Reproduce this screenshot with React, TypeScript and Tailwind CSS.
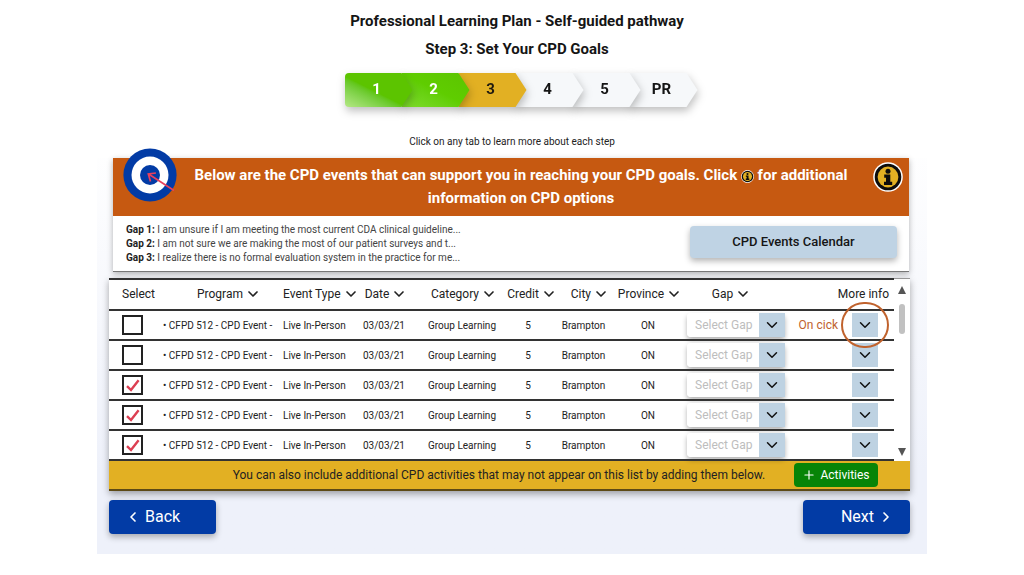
import { ChevronDown, ChevronLeft, ChevronRight, Plus } from 'lucide-react'

const steps = [
  { label: '1', order: 'z-[6]', look: 'rounded-l bg-linear-to-tr from-[#b4e884] via-[#5cc400] via-45% to-[#5cc400] text-white' },
  { label: '2', order: 'z-[5]', look: 'bg-linear-to-tr from-[#7fdc2a] via-[#5fcd00] via-50% to-[#5cc400] text-white' },
  { label: '3', order: 'z-[4]', look: 'bg-[#e2b023] text-[#1f1a10]' },
  { label: '4', order: 'z-[3]', look: 'bg-[#f6f8fa] text-[#151515]' },
  { label: '5', order: 'z-[2]', look: 'bg-[#f6f8fa] text-[#151515]' },
  { label: 'PR', order: 'z-[1]', look: 'bg-[#f6f8fa] text-[#151515]' }
]

const gaps = [
  'I am unsure if I am meeting the most current CDA clinical guideline...',
  'I am not sure we are making the most of our patient surveys and t...',
  'I realize there is no formal evaluation system in the practice for me...'
]

const columns = [
  { title: 'Program', width: 'w-[120px]', align: 'justify-center pl-3' },
  { title: 'Event Type', width: 'w-[75px]', align: 'justify-start' },
  { title: 'Date', width: 'w-[56px]', align: 'justify-center' },
  { title: 'Category', width: 'w-[96px]', align: 'justify-center pl-1' },
  { title: 'Credit', width: 'w-[44px]', align: 'justify-center' },
  { title: 'City', width: 'w-[63px]', align: 'justify-end pr-2' },
  { title: 'Province', width: 'w-[66px]', align: 'justify-center' },
  { title: 'Gap', width: 'w-[109px]', align: 'justify-center pr-3' }
]

const events = [
  { id: 1, checked: false, hint: true },
  { id: 2, checked: false, hint: false },
  { id: 3, checked: true, hint: false },
  { id: 4, checked: true, hint: false },
  { id: 5, checked: true, hint: false }
]

function InfoIcon({ className }: { className: string }) {
  return (
    <svg viewBox="0 0 30 30" className={className} aria-hidden="true">
      <circle cx="15" cy="15" r="14.8" fill="#fff" />
      <circle cx="15" cy="15" r="13.3" fill="#0c0c0c" />
      <circle cx="15" cy="15" r="10.4" fill="#e2b023" />
      <circle cx="15" cy="9.2" r="2.5" fill="#0c0c0c" />
      <path d="M11.2 12.6h6.1v7.2h1.9v3.2h-8.2v-3.2h2v-4h-1.8z" fill="#0c0c0c" />
    </svg>
  )
}

function TargetIcon() {
  return (
    <svg viewBox="0 0 54 54" className="absolute left-[10px] -top-[10px] w-[54px] h-[54px]" aria-hidden="true">
      <circle cx="27" cy="27" r="26.6" fill="#023ba5" />
      <circle cx="27" cy="27" r="18.5" fill="#fff" />
      <circle cx="27" cy="27" r="10" fill="#023ba5" />
      <path d="M51 42.5 25.5 26M27.5 33.5 25.3 26l7.6-1" fill="none" stroke="#e8405c" strokeWidth="1.7" />
    </svg>
  )
}

function SelectBox({ checked }: { checked: boolean }) {
  return (
    <label className="grid w-[21px] h-5 place-items-center">
      <input
        type="checkbox"
        defaultChecked={checked}
        aria-label="Select event"
        className="peer col-start-1 row-start-1 appearance-none w-full h-full border-2 border-[#222] bg-white"
      />
      <svg viewBox="0 0 16 14" className="col-start-1 row-start-1 w-4 h-[14px] pointer-events-none invisible peer-checked:visible" aria-hidden="true">
        <path d="M2 8.2 6 12 13.6 2.2" fill="none" stroke="#dc3f52" strokeWidth="2.4" />
      </svg>
    </label>
  )
}

function GapSelect() {
  return (
    <div className="grid w-[98px] h-6 shadow-[0_3px_5px_rgba(0,0,0,0.3)] rounded-sm">
      <select aria-label="Select gap" className="col-start-1 row-start-1 appearance-none w-full bg-white rounded-sm pl-2 text-[12px] text-[#bdbdbd]">
        <option>Select Gap</option>
        <option>Gap 1</option>
        <option>Gap 2</option>
        <option>Gap 3</option>
      </select>
      <span className="col-start-1 row-start-1 justify-self-end flex items-center justify-center w-[26px] bg-[#bed2e2] pointer-events-none">
        <ChevronDown className="w-[18px] h-[18px] text-[#111]" />
      </span>
    </div>
  )
}

export default function App() {
  return (
    <main className="max-w-[830px] mx-auto bg-linear-to-b from-white from-25% to-[#eef1fa] to-85% font-['Roboto',sans-serif] text-[#222]">
      <header className="flex flex-col items-center pt-[7px] pb-2 bg-white">
        <h1 className="text-[15px] leading-7 font-bold text-[#151515] pl-[10px]">Professional Learning Plan - Self-guided pathway</h1>
        <h2 className="text-[15px] leading-7 font-bold text-[#151515] pl-[10px]">Step 3: Set Your CPD Goals</h2>
        <nav aria-label="Steps" className="mt-[10px] pl-[18px]">
          <ol className="flex pl-[11px]">
            {steps.map((step) => (
              <li key={step.label} className={`-ml-[11px] drop-shadow-[1px_4px_4px_rgba(0,0,0,0.25)] ${step.order}`}>
                <button
                  type="button"
                  className={`block w-[68px] h-[34px] pr-1 pb-[2px] text-[15px] font-bold [clip-path:polygon(0_0,calc(100%-11px)_0,100%_50%,calc(100%-11px)_100%,0_100%)] ${step.look}`}
                >
                  {step.label}
                </button>
              </li>
            ))}
          </ol>
        </nav>
        <p className="mt-[27px] text-[10px] leading-4">Click on any tab to learn more about each step</p>
      </header>

      {/* Intro panel */}
      <section className="relative ml-4 mr-[18px] bg-white border-b border-[#777] shadow-[0_2px_6px_rgba(0,0,0,0.3)]">
        <div className="relative bg-[#c65911] pt-[6px] pb-[6px] pl-[70px] pr-[50px]">
          <TargetIcon />
          <p className="text-center text-[15px] leading-[23px] font-bold text-white">
            Below are the CPD events that can support you in reaching your CPD goals. Click{' '}
            <InfoIcon className="inline w-[13px] h-[13px]" /> for additional
            <br />
            information on CPD options
          </p>
          <button type="button" aria-label="More information" className="absolute right-[6px] top-1">
            <InfoIcon className="w-[30px] h-[30px]" />
          </button>
        </div>
        <div className="flex items-start justify-between pt-[7px] pb-[6px] pl-[13px] pr-3">
          <ul className="text-[10px] leading-[14px] text-[#444]">
            {gaps.map((gap, i) => (
              <li key={gap}>
                <strong className="font-bold text-[#222]">Gap {i + 1}:</strong> {gap}
              </li>
            ))}
          </ul>
          <button type="button" className="mt-[3px] w-[207px] h-8 rounded-sm bg-[#bfd3e4] text-[13px] font-medium text-[#151515] shadow-[0_3px_6px_rgba(0,0,0,0.3)]">
            CPD Events Calendar
          </button>
        </div>
      </section>

      {/* Events list */}
      <section className="mt-[6px] ml-3 mr-[17px] bg-white shadow-[0_3px_7px_rgba(0,0,0,0.35)]">
        <div className="flex">
          <table className="w-full table-fixed border-collapse text-[12px] whitespace-nowrap">
            <thead>
              <tr className="h-[31px] border-y-2 border-[#333]">
                <th className="w-[54px] p-0 pl-[13px] pb-[2px] text-left font-normal">Select</th>
                {columns.map((column) => (
                  <th key={column.title} className={`p-0 pb-[2px] font-normal ${column.width}`}>
                    <button type="button" className={`flex w-full items-center gap-0.5 ${column.align}`}>
                      {column.title}
                      <ChevronDown className="w-4 h-4 shrink-0" strokeWidth={2.5} />
                    </button>
                  </th>
                ))}
                <th className="p-0 pr-[5px] pb-[2px] text-right font-normal">More info</th>
              </tr>
            </thead>
            <tbody>
              {events.map((event) => (
                <tr key={event.id} className="h-[30px] border-b-2 border-[#333] text-[10px]">
                  <td className="p-0 pl-[13px]">
                    <SelectBox checked={event.checked} />
                  </td>
                  <td className="p-0">• CFPD 512 - CPD Event -</td>
                  <td className="p-0">Live In-Person</td>
                  <td className="p-0 pr-1 text-center">03/03/21</td>
                  <td className="p-0 text-center">Group Learning</td>
                  <td className="p-0 pr-2 text-center">5</td>
                  <td className="p-0 pr-1 text-center">Brampton</td>
                  <td className="p-0 pr-1 text-center">ON</td>
                  <td className="p-0 pl-1">
                    <GapSelect />
                  </td>
                  <td className="p-0 pr-4">
                    <div className="flex items-center justify-end gap-[14px]">
                      {event.hint && <span className="text-[12px] text-[#c0622d]">On cick</span>}
                      <button type="button" aria-label="More info" className="relative flex items-center justify-center w-[26px] h-6 bg-[#bed2e2]">
                        <ChevronDown className="w-[18px] h-[18px] text-[#111]" />
                        {event.hint && <span className="absolute z-10 -inset-x-[11px] -inset-y-[11px] rounded-full border-2 border-[#c0622d]" />}
                      </button>
                    </div>
                  </td>
                </tr>
              ))}
            </tbody>
          </table>
          <div className="flex flex-col items-center w-4 shrink-0 pt-[7px] pb-[5px] border-t border-[#999]" aria-hidden="true">
            <svg viewBox="0 0 8 8" className="w-2 h-2">
              <path d="M4 0 8 8H0z" fill="#555" />
            </svg>
            <span className="mt-[10px] w-[6px] h-[30px] rounded-full bg-[#c1c1c1]" />
            <svg viewBox="0 0 8 8" className="mt-auto w-2 h-2">
              <path d="M0 0h8L4 8z" fill="#555" />
            </svg>
          </div>
        </div>
        <div className="flex items-center justify-end h-[30px] pr-8 bg-[#e2b023] border-b-2 border-[#5d4a16]">
          <p className="grow pl-[95px] text-center text-[12px]">
            You can also include additional CPD activities that may not appear on this list by adding them below.
          </p>
          <button type="button" className="flex items-center justify-center gap-1 w-[84px] h-6 rounded-sm bg-[#078407] text-[12px] text-white">
            <Plus className="w-[14px] h-[14px]" />
            Activities
          </button>
        </div>
      </section>

      <footer className="flex justify-between mt-[9px] pl-3 pr-[17px] pb-5">
        <button type="button" className="flex items-center gap-1 w-[107px] h-[34px] pl-4 rounded-sm bg-[#023ba5] text-[16px] text-white shadow-[0_3px_6px_rgba(0,0,0,0.3)]">
          <ChevronLeft className="w-4 h-4" strokeWidth={2.5} />
          Back
        </button>
        <button type="button" className="flex items-center justify-end gap-1 w-[107px] h-[34px] pr-4 rounded-sm bg-[#023ba5] text-[16px] text-white shadow-[0_3px_6px_rgba(0,0,0,0.3)]">
          Next
          <ChevronRight className="w-4 h-4" strokeWidth={2.5} />
        </button>
      </footer>
    </main>
  )
}
